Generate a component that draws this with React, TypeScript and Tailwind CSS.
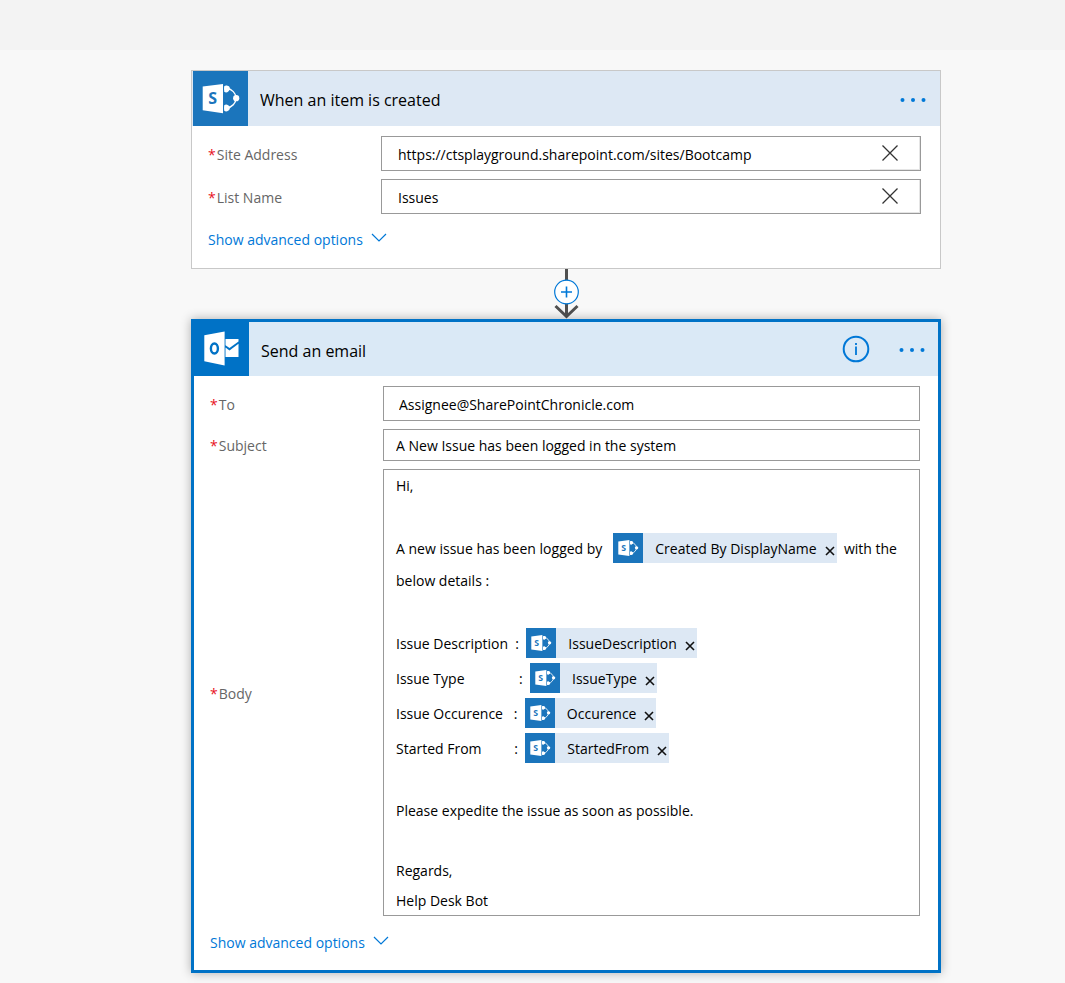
import { useState } from 'react';
import type { ReactNode } from 'react';

const SharePointIcon = ({ className }: { className?: string }) => (
    <svg viewBox="0 0 55 55" className={className} aria-hidden="true">
        <rect width="55" height="55" fill="#1b75bc" />
        <path d="M9.700 15.600 30 12.900v29.300L9.700 39.300z" fill="#fff" />
        <text x="19.600" y="33.200" textAnchor="middle" fontSize="16" fontWeight="700" fontFamily="'Open Sans', sans-serif" fill="#1b75bc">S</text>
        <path d="M34 17.600c5 .6 8.600 4.400 9.200 9.600-.6 5-4.200 9-9.200 9.800" fill="none" stroke="#fff" strokeWidth="1.500" />
        <path d="M31.200 15.200v5.600a3.300 3.300 0 1 0 0-5.600zM31.200 34.200v5.600a3.300 3.300 0 1 0 0-5.600z" fill="#fff" />
        <circle cx="34" cy="17.600" r="2.800" fill="#fff" />
        <circle cx="34" cy="37" r="2.800" fill="#fff" />
        <circle cx="43.200" cy="27.200" r="3.100" fill="#fff" />
    </svg>
);

const OutlookIcon = ({ className }: { className?: string }) => (
    <svg viewBox="0 0 55 54" className={className} aria-hidden="true">
        <rect width="55" height="54" fill="#0072c6" />
        <path d="M10.300 13.300 30.600 9.500v34L10.300 39.300z" fill="#fff" />
        <ellipse cx="20.400" cy="26.500" rx="3.500" ry="5" fill="none" stroke="#0072c6" strokeWidth="2.400" />
        <path d="M31.500 17h13v2.500L35.500 26l-4-2.800z" fill="#fff" />
        <path d="M31.500 25.500l4 2.900 9-6.600V35h-13z" fill="#fff" />
    </svg>
);

const ChevronIcon = () => (
    <svg viewBox="0 0 16 10" className="h-[10px] w-4" fill="none" stroke="#0078d7" strokeWidth="1.200" aria-hidden="true">
        <path d="M1 1l7 7 7-7" />
    </svg>
);

const MoreButton = () => (
    <button type="button" aria-label="More options" className="flex h-8 items-center pt-0.5">
        <svg viewBox="0 0 26 4" className="h-1 w-[26px]" fill="#0078d7" aria-hidden="true">
            <circle cx="2.500" cy="2" r="2" />
            <circle cx="13" cy="2" r="2" />
            <circle cx="23.500" cy="2" r="2" />
        </svg>
    </button>
);

const FieldLabel = ({ id, htmlFor, children }: { id?: string; htmlFor?: string; children: ReactNode }) => (
    <label id={id} htmlFor={htmlFor} className="w-[173px] shrink-0 pt-0.5 text-[#666]">
        <span className="mr-px text-[#e81123]">*</span>
        {children}
    </label>
);

const ClearableField = ({ id, label, initial }: { id: string; label: string; initial: string }) => {
    const [value, setValue] = useState(initial);

    return (
        <div className="flex items-center">
            <FieldLabel htmlFor={id}>{label}</FieldLabel>
            <div className="flex h-[35px] min-w-0 flex-1 border border-[#999]">
                <input
                    id={id}
                    value={value}
                    onChange={(e) => setValue(e.target.value)}
                    className="min-w-0 flex-1 pt-0.5 pl-4 text-black outline-none"
                />
                <div className="flex w-[50px] border-r border-b border-[#e5e5e5]">
                    <button type="button" aria-label={`Clear ${label}`} onClick={() => setValue('')} className="flex w-10 items-center justify-center">
                        <svg viewBox="0 0 16 16" className="size-4" stroke="#333" strokeWidth="1.300" aria-hidden="true">
                            <path d="M.5.500l15 15M15.500.500l-15 15" />
                        </svg>
                    </button>
                </div>
            </div>
        </div>
    );
};

const AdvancedOptions = () => (
    <button type="button" className="flex h-5 items-center gap-2 text-[#0078d7]">
        <span>Show advanced options</span>
        <span className="pb-1">
            <ChevronIcon />
        </span>
    </button>
);

const Token = ({ name }: { name: string }) => (
    <span className="inline-flex h-[30px] items-center bg-[#dde8f4]" contentEditable={false}>
        <SharePointIcon className="size-[30px]" />
        <span className="ml-3 pt-0.5">{name}</span>
        <button type="button" aria-label={`Remove ${name}`} className="mr-[2px] ml-2 flex h-full items-center pt-1.5">
            <svg viewBox="0 0 10 10" className="size-[10px]" stroke="#111" strokeWidth="1.600" aria-hidden="true">
                <path d="M1 1l8 8M9 1l-8 8" />
            </svg>
        </button>
    </span>
);

const Line = ({ children }: { children?: ReactNode }) => (
    <div className="h-[30px] leading-8">{children}</div>
);

const TokenLine = ({ before, name, after }: { before: string; name: string; after?: string }) => (
    <div className="flex h-[35px] items-center whitespace-pre">
        <span className="pt-[3px]">{before}</span>
        <Token name={name} />
        {after && <span className="pt-[3px]">{after}</span>}
    </div>
);

const App = () => {
    const [to, setTo] = useState('Assignee@SharePointChronicle.com');
    const [subject, setSubject] = useState('A New Issue has been logged in the system');

    return (
        <div className="min-h-screen bg-[#f8f8f8] font-['Open_Sans','Noto_Sans',sans-serif] text-sm text-black">
            <div className="h-[50px] bg-[#f3f3f3]" />

            <main className="flex flex-col items-center pt-5 pb-2.5 pl-[67px]">
                {/* Trigger */}
                <section className="w-full max-w-[750px] border border-[#c8c8c8] bg-white">
                    <header className="flex h-[55px] items-center bg-[#dde8f4] pr-[14px] pl-px">
                        <SharePointIcon className="size-[55px]" />
                        <h2 className="ml-3 flex-1 pt-[3px] text-base">When an item is created</h2>
                        <MoreButton />
                    </header>
                    <div className="flex flex-col gap-2 pt-[10px] pr-[19px] pb-[18px] pl-4">
                        <ClearableField id="site" label="Site Address" initial="https://ctsplayground.sharepoint.com/sites/Bootcamp" />
                        <ClearableField id="list" label="List Name" initial="Issues" />
                        <div className="pt-2">
                            <AdvancedOptions />
                        </div>
                    </div>
                </section>

                <button type="button" aria-label="Insert a new step" className="h-[50px]">
                    <svg viewBox="0 0 26 50" className="h-[50px] w-[26px]" fill="none" aria-hidden="true">
                        <path d="M13.500 0v48" stroke="#505050" strokeWidth="3" />
                        <path d="M2.500 37l11 10.500L24.500 37" stroke="#505050" strokeWidth="3" />
                        <circle cx="13.500" cy="23" r="11.800" fill="#fff" stroke="#0078d7" strokeWidth="1.200" />
                        <path d="M8 23h11M13.500 17.500v11" stroke="#0078d7" strokeWidth="1.600" />
                    </svg>
                </button>

                {/* Action */}
                <section className="w-full max-w-[750px] border-3 border-[#0072c6] bg-white shadow-[0_0_10px_rgba(0,0,0,0.3)]">
                    <header className="flex h-[54px] items-center bg-[#dae9f6] pr-[13px]">
                        <OutlookIcon className="h-[54px] w-[55px]" />
                        <h2 className="ml-3 flex-1 pt-[3px] text-base">Send an email</h2>
                        <button type="button" aria-label="Information" className="mr-[29px]">
                            <svg viewBox="0 0 28 28" className="size-7" fill="none" stroke="#0078d7" strokeWidth="2" aria-hidden="true">
                                <circle cx="14" cy="14" r="12.300" />
                                <path d="M14 11.500v8.500M14 8v2" strokeWidth="1.800" />
                            </svg>
                        </button>
                        <MoreButton />
                    </header>
                    <div className="flex flex-col gap-2 pt-[10px] pr-[18px] pb-[17px] pl-4">
                        <div className="flex items-center">
                            <FieldLabel htmlFor="to">To</FieldLabel>
                            <input
                                id="to"
                                value={to}
                                onChange={(e) => setTo(e.target.value)}
                                className="h-[35px] min-w-0 flex-1 border border-[#999] pt-0.5 pl-[15px] outline-none"
                            />
                        </div>
                        <div className="flex items-center">
                            <FieldLabel htmlFor="subject">Subject</FieldLabel>
                            <input
                                id="subject"
                                value={subject}
                                onChange={(e) => setSubject(e.target.value)}
                                className="h-8 min-w-0 flex-1 border border-[#999] pl-3 outline-none"
                            />
                        </div>
                        <div className="flex items-center">
                            <FieldLabel id="body-label">Body</FieldLabel>
                            <div
                                role="textbox"
                                aria-multiline="true"
                                aria-labelledby="body-label"
                                contentEditable
                                suppressContentEditableWarning
                                className="min-w-0 flex-1 border border-[#999] pl-3 outline-none"
                            >
                                <Line>Hi,</Line>
                                <Line />
                                <TokenLine before="A new issue has been logged by   " name="Created By DisplayName" after="  with the" />
                                <Line>below details :</Line>
                                <Line />
                                <TokenLine before="Issue Description  :  " name="IssueDescription" />
                                <TokenLine before="Issue Type               :  " name="IssueType" />
                                <TokenLine before="Issue Occurence   :  " name="Occurence" />
                                <TokenLine before="Started From         :  " name="StartedFrom" />
                                <Line />
                                <Line>Please expedite the issue as soon as possible.</Line>
                                <Line />
                                <Line>Regards,</Line>
                                <Line>Help Desk Bot</Line>
                            </div>
                        </div>
                        <div className="pt-[9px]">
                            <AdvancedOptions />
                        </div>
                    </div>
                </section>
            </main>
        </div>
    );
};

export default App;
